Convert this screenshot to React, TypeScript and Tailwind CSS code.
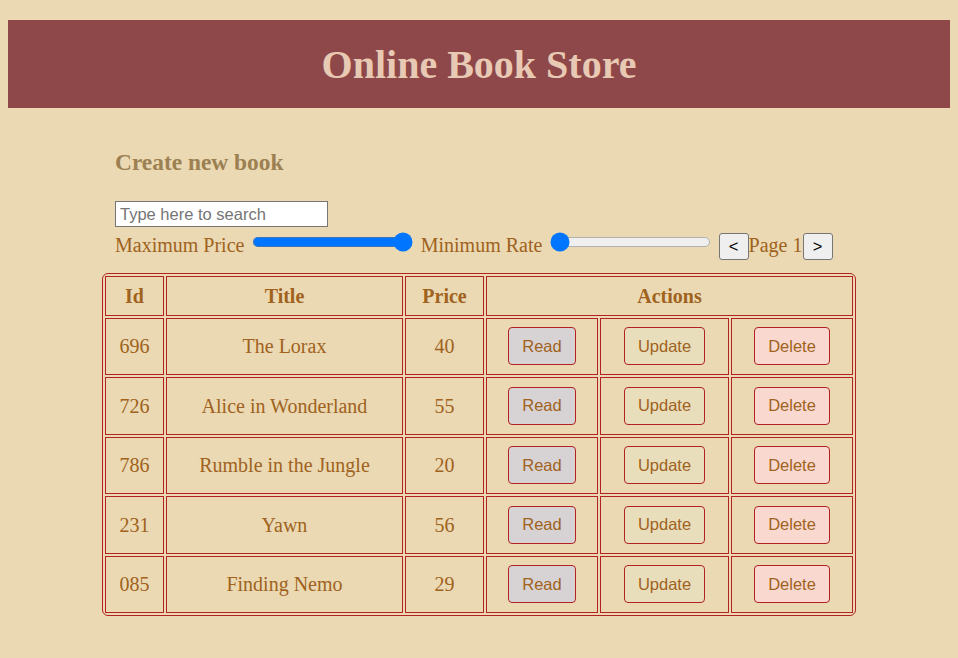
import React, { useState } from 'react';

type Book = { id: string; title: string; price: number };

const books: Book[] = [
  { id: '696', title: 'The Lorax', price: 40 },
  { id: '726', title: 'Alice in Wonderland', price: 55 },
  { id: '786', title: 'Rumble in the Jungle', price: 20 },
  { id: '231', title: 'Yawn', price: 56 },
  { id: '085', title: 'Finding Nemo', price: 29 },
];

const cell = 'border border-[#B22222] text-center';
const actionBtn =
  "h-[38px] px-[13px] border border-[#B22222] rounded-[4px] text-[16.5px] text-[#A0621D] font-['Liberation_Sans',Arial,sans-serif]";
const navBtn =
  "h-[27px] w-[30px] bg-[#EFEFEF] border border-[#767676] rounded-[3px] text-[16.5px] text-black font-['Liberation_Sans',Arial,sans-serif]";

function App() {
  const [search, setSearch] = useState('');
  const [maxPrice, setMaxPrice] = useState(100);
  const [minRate, setMinRate] = useState(0);

  return (
    <div className="min-h-[658px] bg-[#EAD9B3] pt-5 font-['Liberation_Serif','Times_New_Roman',serif] text-[#A0621D]">
      <div className="mx-2 h-[88px] bg-[#8E484A] flex items-center justify-center">
        <h1 className="text-[40px] font-bold text-[#E8C9B3] leading-none mt-[2px]">Online Book Store</h1>
      </div>

      <div className="ml-[102px] w-[754px]">
        <div className="pl-[13px]">
          <h3 className="mt-[40px] text-[23.4px] font-bold text-[#9C8052] leading-[28px]">Create new book</h3>
          <input
            value={search}
            onChange={(e) => setSearch(e.target.value)}
            placeholder="Type here to search"
            className="mt-[25px] block w-[213px] h-[26px] bg-white border border-[#767676] px-[4px] text-[16.5px] text-black placeholder:text-[#757575] font-['Liberation_Sans',Arial,sans-serif] outline-none"
          />
          <div className="mt-[2px] text-[20px] leading-[23px] whitespace-nowrap">
            Maximum Price{' '}
            <input
              type="range"
              min={0}
              max={100}
              value={maxPrice}
              onChange={(e) => setMaxPrice(Number(e.target.value))}
              className="[zoom:1.25] m-[2px]"
            />{' '}
            Minimum Rate{' '}
            <input
              type="range"
              min={0}
              max={5}
              value={minRate}
              onChange={(e) => setMinRate(Number(e.target.value))}
              className="[zoom:1.25] m-[2px]"
            />{' '}
            <button className={navBtn}>&lt;</button>Page 1<button className={navBtn}>&gt;</button>
          </div>
        </div>

        <table className="mt-[13px] w-[754px] border-separate border-spacing-[2px] border border-[#B22222] rounded-[6px] text-[20px]">
          <thead>
            <tr className="h-[40px] font-bold">
              <th className={`${cell} w-[59px]`}>Id</th>
              <th className={`${cell} w-[237px]`}>Title</th>
              <th className={`${cell} w-[79px]`}>Price</th>
              <th className={cell} colSpan={3}>
                Actions
              </th>
            </tr>
          </thead>
          <tbody>
            {books.map((b) => (
              <tr key={b.id} className="h-[57.5px]">
                <td className={cell}>{b.id}</td>
                <td className={cell}>{b.title}</td>
                <td className={cell}>{b.price}</td>
                <td className={`${cell} w-[112px]`}>
                  <button className={`${actionBtn} bg-[#D7D2D3]`}>Read</button>
                </td>
                <td className={`${cell} w-[129px]`}>
                  <button className={`${actionBtn} bg-[#E8DEBC]`}>Update</button>
                </td>
                <td className={cell}>
                  <button className={`${actionBtn} bg-[#F9D9CF]`}>Delete</button>
                </td>
              </tr>
            ))}
          </tbody>
        </table>
      </div>
    </div>
  );
}

export default App;
